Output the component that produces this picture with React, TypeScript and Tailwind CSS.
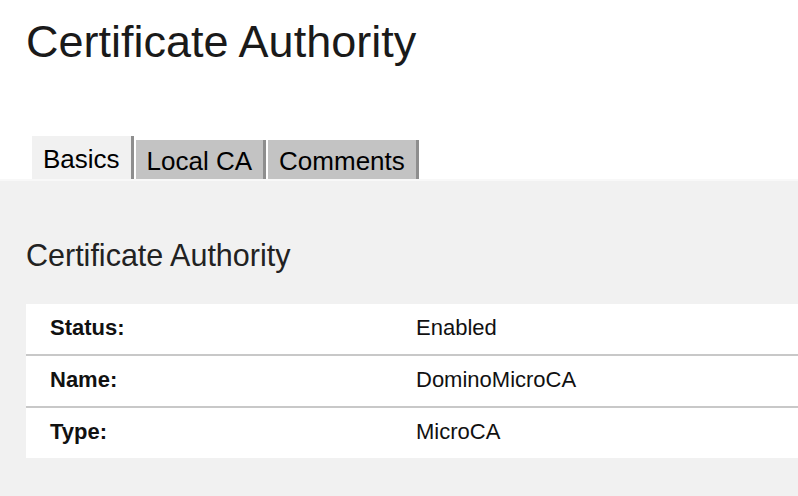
export default function App() {
  const rows = [
    { label: "Status:", value: "Enabled" },
    { label: "Name:", value: "DominoMicroCA" },
    { label: "Type:", value: "MicroCA" },
  ]

  return (
    <div className="flex h-[496px] w-[798px] flex-col overflow-hidden bg-white font-['Liberation_Sans',Arial,sans-serif] text-[#111]">
      {/* Page title */}
      <h1 className="pl-[26px] pt-[19px] text-[45px] leading-none text-[#1a1a1a]">Certificate Authority</h1>

      {/* Tabs */}
      <div className="mt-[72px] flex h-[43px] items-end gap-[2px] pl-[32px]">
        <Tab label="Basics" active />
        <Tab label="Local CA" />
        <Tab label="Comments" />
      </div>

      {/* Panel */}
      <div className="flex-1 border-t-2 border-[#f8f8f8] bg-[#f1f1f1] pl-[26px]">
        <h2 className="mt-[59px] text-[30.5px] leading-none text-[#222]">Certificate Authority</h2>
        <div className="mt-[33px] bg-white">
          {rows.map((r, i) => (
            <div
              key={r.label}
              className={`flex h-[50px] items-center pb-[3px] text-[22px] ${i < rows.length - 1 ? "border-b-2 border-[#c8c8c8] h-[52px]" : ""}`}
            >
              <span className="w-[390px] pl-[24px] font-bold">{r.label}</span>
              <span>{r.value}</span>
            </div>
          ))}
        </div>
      </div>
    </div>
  )
}

function Tab({ label, active }: { label: string; active?: boolean }) {
  return (
    <div
      className={`flex items-center border-r-[3px] border-[#8e8e8e] pl-[11px] pr-[11px] pt-[2px] text-[26px] leading-none text-black ${
        active ? "h-[43px] bg-[#f1f1f1]" : "h-[39px] bg-[#c3c3c3]"
      }`}
    >
      {label}
    </div>
  )
}
